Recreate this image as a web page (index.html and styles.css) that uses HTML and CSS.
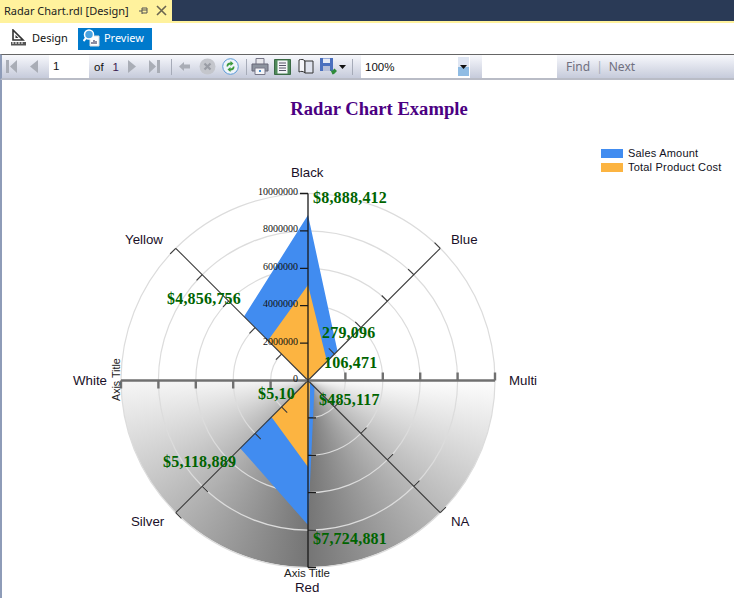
FILE: index.html
```
<!DOCTYPE html>
<html lang="en">
<head>
    <meta charset="UTF-8">
    <meta name="viewport" content="width=device-width, initial-scale=1.0">
    <title>Radar Chart.rdl [Design]</title>
    <link rel="stylesheet" href="styles.css">
</head>
<body>
    <div class="tab-strip">
        <div class="tab">
            <span class="tab-title">Radar Chart.rdl [Design]</span>
            <svg class="tab-icon" width="10" height="10" viewBox="0 0 10 10"><path d="M0 5h3M3 2v6M3 2h5v5H3M8 4h-5" fill="none" stroke="#555" stroke-width="1"/></svg>
            <svg class="tab-icon" width="11" height="11" viewBox="0 0 11 11"><path d="M1 1l9 9M10 1l-9 9" fill="none" stroke="#6b6550" stroke-width="1.6"/></svg>
        </div>
    </div>
    <div class="mode-bar">
        <div class="mode-button">
            <svg width="17" height="18" viewBox="0 0 17 18"><path d="M3 1v10h10z" fill="none" stroke="#333" stroke-width="1.6"/><path d="M5.500 6v3h3z" fill="#333"/><path d="M1 13h15v3.500H1z" fill="#555"/><path d="M3 13v2M6 13v2M9 13v2M12 13v2" stroke="#fff"/></svg>
            <span>Design</span>
        </div>
        <div class="mode-button mode-active">
            <svg width="17" height="18" viewBox="0 0 17 18"><path d="M7 7h9v10H7z" fill="#fff" stroke="#ddd"/><path d="M9 15v-2M11 15v-4M13 15v-3" stroke="#446" stroke-width="1.2"/><circle cx="6" cy="5.500" r="4.500" fill="#4aa3e0" stroke="#fff" stroke-width="1.500"/><path d="M3 9l-2.500 3" stroke="#fff" stroke-width="2"/></svg>
            <span>Preview</span>
        </div>
    </div>
    <div class="toolbar">
        <div class="tool-group page-nav">
            <svg class="first-icon" width="11" height="13" viewBox="0 0 11 13"><path d="M0 0h3v13H0zM11 0v13L4 6.500z" fill="#a9adb6"/></svg>
            <svg class="prev-icon" width="8" height="13" viewBox="0 0 8 13"><path d="M8 0v13L0 6.500z" fill="#a9adb6"/></svg>
            <span class="page-input">1</span>
            <span class="page-of">of</span>
            <span class="page-count">1</span>
            <svg class="next-icon" width="8" height="13" viewBox="0 0 8 13"><path d="M0 0v13l8-6.500z" fill="#a9adb6"/></svg>
            <svg class="last-icon" width="11" height="13" viewBox="0 0 11 13"><path d="M0 0v13l7-6.500zM8 0h3v13H8z" fill="#a9adb6"/></svg>
        </div>
        <span class="tool-sep first-sep"></span>
        <svg class="back-icon" width="11" height="9" viewBox="0 0 11 9"><path d="M0 4.500L5 0v2.500h6v4H5V9z" fill="#a9adb6"/></svg>
        <svg class="stop-icon" width="17" height="17" viewBox="0 0 17 17"><circle cx="8.500" cy="8.500" r="8" fill="#c4c6cc"/><path d="M5.500 5.500l6 6M11.500 5.500l-6 6" stroke="#9a9da5" stroke-width="2.200"/></svg>
        <svg class="refresh-icon" width="17" height="17" viewBox="0 0 17 17"><circle cx="8.500" cy="8.500" r="7.800" fill="#eef4fb" stroke="#5c9bd6"/><path d="M4.500 8.500a4 4 0 0 1 4-4V3l3 2.500-3 2.500V6.500a2.500 2.500 0 0 0-2.500 2z" fill="#3c9a3c"/><path d="M12.500 8.500a4 4 0 0 1-4 4V14l-3-2.500 3-2.500v1.500a2.500 2.500 0 0 0 2.500-2z" fill="#3c9a3c"/></svg>
        <span class="tool-sep"></span>
        <svg class="print-icon" width="18" height="17" viewBox="0 0 18 17"><path d="M5 .500h8v6H5z" fill="#e8e8ec" stroke="#778"/><path d="M1 6h16v7H1z" fill="#8d939e" stroke="#667"/><path d="M4 10h10v6.500H4z" fill="#f4f4f7" stroke="#778"/><path d="M8 12h2v2H8z" fill="#4a90d0"/></svg>
        <svg class="page-icon" width="17" height="16" viewBox="0 0 17 16"><path d="M.5.500h16v15H.5z" fill="#4f8a5a" stroke="#3a6a45"/><path d="M3.500 1.500h10v13h-10z" fill="#f4f5f8"/><path d="M5 4h7M5 6.500h7M5 9h7M5 11.500h7" stroke="#556"/></svg>
        <svg class="book-icon" width="16" height="15" viewBox="0 0 16 15"><path d="M1 1c2-1 4-1 6 1v12c-2-2-4-2-6-1z" fill="#f5f6fa" stroke="#333"/><path d="M7 2h8v12H7z" fill="#dfe3ee" stroke="#333"/></svg>
        <svg class="save-icon" width="18" height="17" viewBox="0 0 18 17"><path d="M0 0h13v13H0z" fill="#4a6fbe"/><path d="M3 .500h7v4.500H3z" fill="#e6eaf5"/><path d="M3 8h7v5H3z" fill="#b4bdd8"/><path d="M10 11l2 2 2.500-2.500 2.500 2.500-3 3-1.500.5z" fill="#2e8b3a"/></svg>
        <svg class="menu-arrow" width="7" height="4" viewBox="0 0 7 4"><path d="M0 0h7L3.500 4z" fill="#111"/></svg>
        <span class="tool-sep"></span>
        <div class="zoom-select">
            <span class="zoom-value">100%</span>
            <span class="zoom-button"><svg width="7" height="4" viewBox="0 0 7 4"><path d="M0 0h7L3.500 4z" fill="#111"/></svg></span>
        </div>
        <span class="find-input"></span>
        <div class="find-links">
            <span>Find</span>
            <span class="find-sep">|</span>
            <span>Next</span>
        </div>
    </div>
    <div class="report">
        <h1 class="report-title">Radar Chart Example</h1>
        <div class="legend">
            <div class="legend-row"><span class="swatch swatch-sales"></span>Sales Amount</div>
            <div class="legend-row"><span class="swatch swatch-cost"></span>Total Product Cost</div>
        </div>
        <div class="radar-shade"></div>
        <svg class="radar" width="732" height="518" viewBox="2 80 732 518">
            <defs>
                <g id="axis">
                    <line x1="308" y1="380.500" x2="308" y2="193.500"/>
                    <path d="M308 343.100h-8M308 305.700h-8M308 268.300h-8M308 230.900h-8M308 193.500h-8"/>
                </g>
            </defs>
            <g class="rings">
                <circle cx="308" cy="380.500" r="37.400"/>
                <circle cx="308" cy="380.500" r="74.800"/>
                <circle cx="308" cy="380.500" r="112.200"/>
                <circle cx="308" cy="380.500" r="149.600"/>
                <circle cx="308" cy="380.500" r="187"/>
            </g>
            <polygon class="series-sales" points="308,215 337.500,351 308,380.500 314.500,387 308,525 240,448 308,380.500 244,316.500"/>
            <polygon class="series-cost" points="308,285 327,361.500 308,380.500 310,383 308,467 271.500,417 308,380.500 268,340.500"/>
            <use href="#axis" class="axis-diagonal" transform="rotate(45 308 380.500)"/>
            <use href="#axis" class="axis-diagonal" transform="rotate(135 308 380.500)"/>
            <use href="#axis" class="axis-diagonal" transform="rotate(225 308 380.500)"/>
            <use href="#axis" class="axis-diagonal" transform="rotate(315 308 380.500)"/>
            <use href="#axis" class="axis-flat" transform="rotate(90 308 380.500)"/>
            <use href="#axis" class="axis-flat" transform="rotate(270 308 380.500)"/>
            <use href="#axis" class="axis-upright"/>
            <use href="#axis" class="axis-upright" transform="rotate(180 308 380.500)"/>
            <g class="scale-labels">
                <text x="298" y="195">10000000</text>
                <text x="298" y="232">8000000</text>
                <text x="298" y="270">6000000</text>
                <text x="298" y="307">4000000</text>
                <text x="298" y="345">2000000</text>
                <text x="298" y="382">0</text>
            </g>
            <g class="category-labels">
                <text x="291" y="177">Black</text>
                <text x="451" y="244">Blue</text>
                <text x="509" y="385">Multi</text>
                <text x="451" y="526">NA</text>
                <text x="295" y="592">Red</text>
                <text x="131" y="526">Silver</text>
                <text x="73" y="385">White</text>
                <text x="125" y="244">Yellow</text>
            </g>
            <g class="axis-titles">
                <text class="axis-title-bottom" x="284" y="577">Axis Title</text>
                <text transform="translate(120 401) rotate(-90)">Axis Title</text>
            </g>
            <g class="value-labels">
                <text x="313" y="203">$8,888,412</text>
                <text x="167" y="304">$4,856,756</text>
                <text x="322" y="338">279,096</text>
                <text x="324" y="368">106,471</text>
                <text x="319" y="405">$485,117</text>
                <text x="258" y="399">$5,10</text>
                <text x="163" y="467">$5,118,889</text>
                <text x="313" y="544">$7,724,881</text>
            </g>
        </svg>
    </div>
</body>
</html>
```
FILE: styles.css
```
html, body {
    margin: 0;
    padding: 0;
    height: 598px;
    overflow: hidden;
}
body {
    font-family: 'Liberation Sans', Arial, sans-serif;
    background-color: #ffffff;
    color: #111111;
}
.tab-strip {
    height: 21px;
    background-color: #2a3a56;
    border-bottom: 2px solid #fff29d;
    display: flex;
}
.tab {
    width: 172px;
    box-sizing: border-box;
    padding: 0 5px 0 4px;
    background-color: #fff29d;
    display: flex;
    align-items: center;
    font-family: 'Noto Sans', sans-serif;
    font-size: 11px;
    color: #222222;
}
.tab-title {
    flex: 1;
    white-space: nowrap;
}
.tab-icon {
    margin-left: 7px;
}
.mode-bar {
    height: 31px;
    box-sizing: border-box;
    padding: 5px 0 4px 10px;
    display: flex;
    align-items: stretch;
    gap: 10px;
    font-family: 'Noto Sans', sans-serif;
    font-size: 11px;
}
.mode-button {
    display: flex;
    align-items: center;
    gap: 5px;
    padding-bottom: 3px;
}
.mode-active {
    background-color: #007acc;
    color: #ffffff;
    width: 74px;
    box-sizing: border-box;
    gap: 4px;
    padding: 0 0 3px 5px;
}
.toolbar {
    height: 26px;
    box-sizing: border-box;
    border-top: 1px solid #666666;
    border-bottom: 2px solid #b9bcc6;
    border-left: 2px solid #8e9cb8;
    background: linear-gradient(#f7f8fc, #c6cbdb);
    display: flex;
    align-items: center;
    font-size: 11.500px;
}
.tool-group {
    display: flex;
    align-items: center;
    height: 100%;
}
.first-icon {
    margin-left: 4px;
}
.prev-icon {
    margin-left: 13px;
}
.page-input {
    width: 40px;
    height: 100%;
    box-sizing: border-box;
    margin-left: 11px;
    padding-left: 4px;
    line-height: 23px;
    background-color: #ffffff;
}
.page-of {
    margin-left: 5px;
}
.page-count {
    margin-left: 9px;
    color: #3a1a50;
}
.next-icon {
    margin-left: 9px;
}
.last-icon {
    margin-left: 13px;
}
.tool-sep {
    width: 1px;
    height: 16px;
    margin-left: 7px;
    background-color: #a6abb8;
}
.first-sep {
    margin-left: 11px;
}
.back-icon {
    margin-left: 7px;
}
.stop-icon {
    margin-left: 9px;
}
.refresh-icon {
    margin-left: 6px;
}
.print-icon {
    margin-left: 4px;
}
.page-icon {
    margin-left: 5px;
}
.book-icon {
    margin-left: 7px;
}
.save-icon {
    margin-left: 6px;
}
.menu-arrow {
    margin-left: 1px;
}
.menu-arrow + .tool-sep {
    margin-left: 6px;
}
.zoom-select {
    width: 109px;
    height: 100%;
    box-sizing: border-box;
    margin-left: 8px;
    background-color: #ffffff;
    display: flex;
    align-items: center;
    justify-content: space-between;
    padding-left: 4px;
}
.zoom-button {
    width: 11px;
    height: 19px;
    display: flex;
    align-items: center;
    justify-content: center;
    background: linear-gradient(#dfe6f3 55%, #8fbce4 55%);
    margin-right: 1px;
}
.find-input {
    width: 75px;
    height: 100%;
    margin-left: 12px;
    background-color: #ffffff;
}
.find-links {
    margin-left: 9px;
    display: flex;
    gap: 6px;
    font-family: 'Noto Sans', sans-serif;
    font-size: 12px;
    color: #70707f;
}
.find-sep {
    color: #a6abb8;
}
.report {
    position: relative;
    height: 518px;
    box-sizing: border-box;
    border-left: 2px solid #8e9cb8;
}
.report-title {
    margin: 0;
    padding: 18px 0 0 22px;
    text-align: center;
    font-family: 'Liberation Serif', serif;
    font-size: 18.600px;
    line-height: 22px;
    font-weight: bold;
    color: #4b0082;
}
.legend {
    position: absolute;
    left: 599px;
    top: 66px;
    font-size: 11px;
    letter-spacing: 0.200px;
    color: #111122;
}
.legend-row {
    display: flex;
    align-items: center;
    gap: 5px;
    height: 14px;
}
.swatch {
    width: 22px;
    height: 9px;
}
.swatch-sales {
    background-color: #418cf0;
}
.swatch-cost {
    background-color: #fcb441;
}
.radar-shade {
    position: absolute;
    left: 119px;
    top: 113px;
    width: 374px;
    height: 374px;
    border-radius: 50%;
    background: conic-gradient(from 90deg, #fdfdfd 0deg, #757575 90deg, #f6f6f6 180deg, transparent 180deg);
}
.radar {
    position: absolute;
    left: 0;
    top: 0;
}
.rings circle {
    fill: none;
    stroke: #dcdcdc;
    stroke-width: 1.200;
}
.series-sales {
    fill: #418cf0;
}
.series-cost {
    fill: #fcb441;
}
.axis-upright {
    stroke: #1a1a1a;
    stroke-width: 1.300;
    fill: none;
}
.axis-flat {
    stroke: #707070;
    stroke-width: 2.400;
    fill: none;
}
.axis-diagonal {
    stroke: #3a3a3a;
    stroke-width: 1.100;
    fill: none;
}
.scale-labels text {
    font-family: 'Liberation Serif', serif;
    font-size: 10px;
    text-anchor: end;
    fill: #111111;
}
.category-labels text {
    font-size: 13.300px;
    fill: #1a1028;
}
.axis-titles text {
    font-size: 10.700px;
    fill: #222222;
}
.axis-titles .axis-title-bottom {
    font-size: 11.500px;
}
.value-labels text {
    font-family: 'Liberation Serif', serif;
    font-size: 16px;
    font-weight: bold;
    letter-spacing: 0.200px;
    fill: #006400;
}
```
